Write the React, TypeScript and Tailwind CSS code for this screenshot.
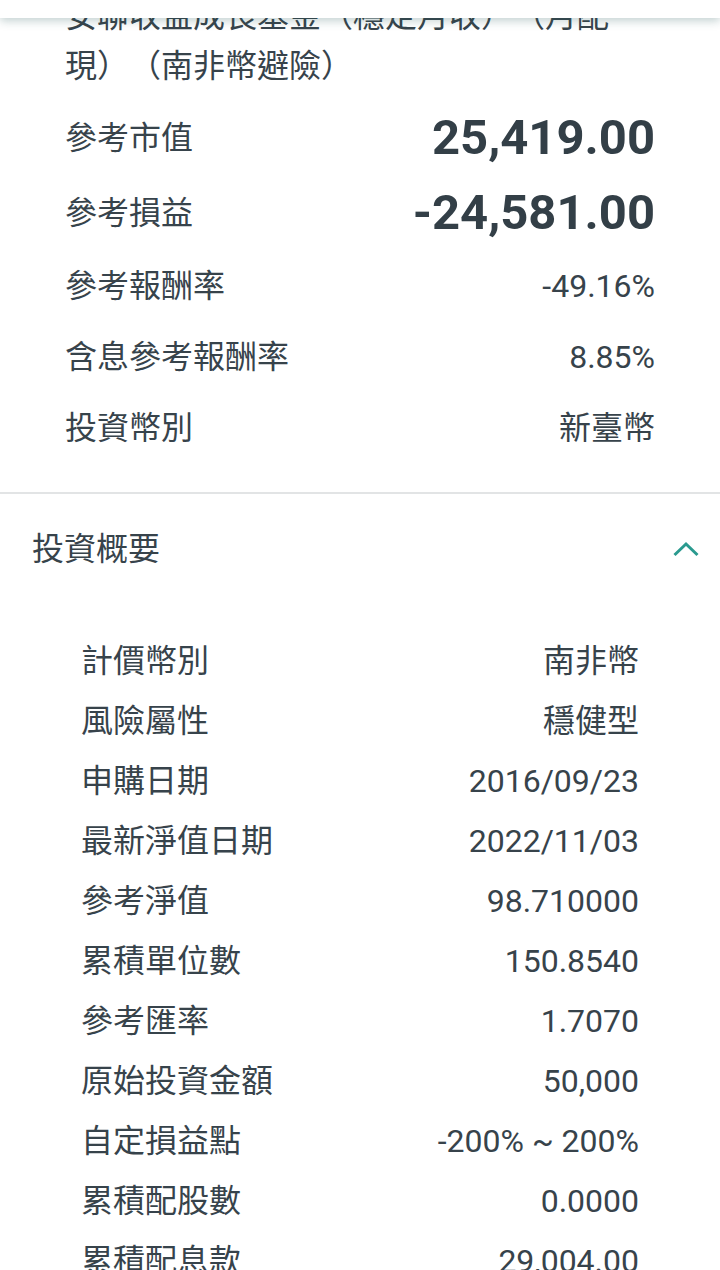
import React from "react";

const summary = [
  { label: "參考報酬率", value: "-49.16%" },
  { label: "含息參考報酬率", value: "8.85%" },
  { label: "投資幣別", value: "新臺幣" },
];

const details = [
  { label: "計價幣別", value: "南非幣" },
  { label: "風險屬性", value: "穩健型" },
  { label: "申購日期", value: "2016/09/23" },
  { label: "最新淨值日期", value: "2022/11/03" },
  { label: "參考淨值", value: "98.710000" },
  { label: "累積單位數", value: "150.8540" },
  { label: "參考匯率", value: "1.7070" },
  { label: "原始投資金額", value: "50,000" },
  { label: "自定損益點", value: "-200% ~ 200%" },
  { label: "累積配股數", value: "0.0000" },
  { label: "累積配息款", value: "29,004.00" },
];

export default function App() {
  return (
    <div className="relative w-[720px] h-[1270px] overflow-hidden bg-white text-[#37434b] font-['Roboto','Noto_Sans_CJK_TC',sans-serif] [text-spacing-trim:space-all]">
      {/* top bar (page scrolled under it) */}
      <div className="absolute top-0 left-0 right-0 h-[18px] bg-white shadow-[0_3px_10px_rgba(40,90,90,0.28)] z-10" />

      {/* fund summary */}
      <div className="px-[65px] pb-[29px]">
        <div className="-mt-[9px] text-[32px] leading-[50px]">
          安聯收益成長基金（穩定月收）（月配
          <br />
          現）（南非幣避險）
        </div>
        <div className="mt-[9px]">
          <div className="h-[75px] flex items-center justify-between">
            <span className="text-[32px]">參考市值</span>
            <span className="text-[49px] font-bold text-[#333f47]">25,419.00</span>
          </div>
          <div className="h-[75px] flex items-center justify-between">
            <span className="text-[32px]">參考損益</span>
            <span className="text-[49px] font-bold text-[#333f47]">-24,581.00</span>
          </div>
          {summary.map((row) => (
            <div key={row.label} className="h-[71px] flex items-center justify-between text-[32px]">
              <span>{row.label}</span>
              <span>{row.value}</span>
            </div>
          ))}
        </div>
      </div>

      <div className="h-[2px] bg-[#e2e4e5]" />

      {/* 投資概要 */}
      <div className="h-[110px] pl-[32px] pr-[21px] flex items-center justify-between">
        <span className="text-[32px]">投資概要</span>
        <svg width="26" height="16" viewBox="0 0 26 16" fill="none">
          <path d="M1.5 14L13 3l11.5 11" stroke="#2a9a8f" strokeWidth="3" />
        </svg>
      </div>
      <div className="pt-[27px] px-[81px]">
        {details.map((row) => (
          <div key={row.label} className="h-[60px] flex items-center justify-between text-[32px]">
            <span>{row.label}</span>
            <span>{row.value}</span>
          </div>
        ))}
      </div>
    </div>
  );
}
